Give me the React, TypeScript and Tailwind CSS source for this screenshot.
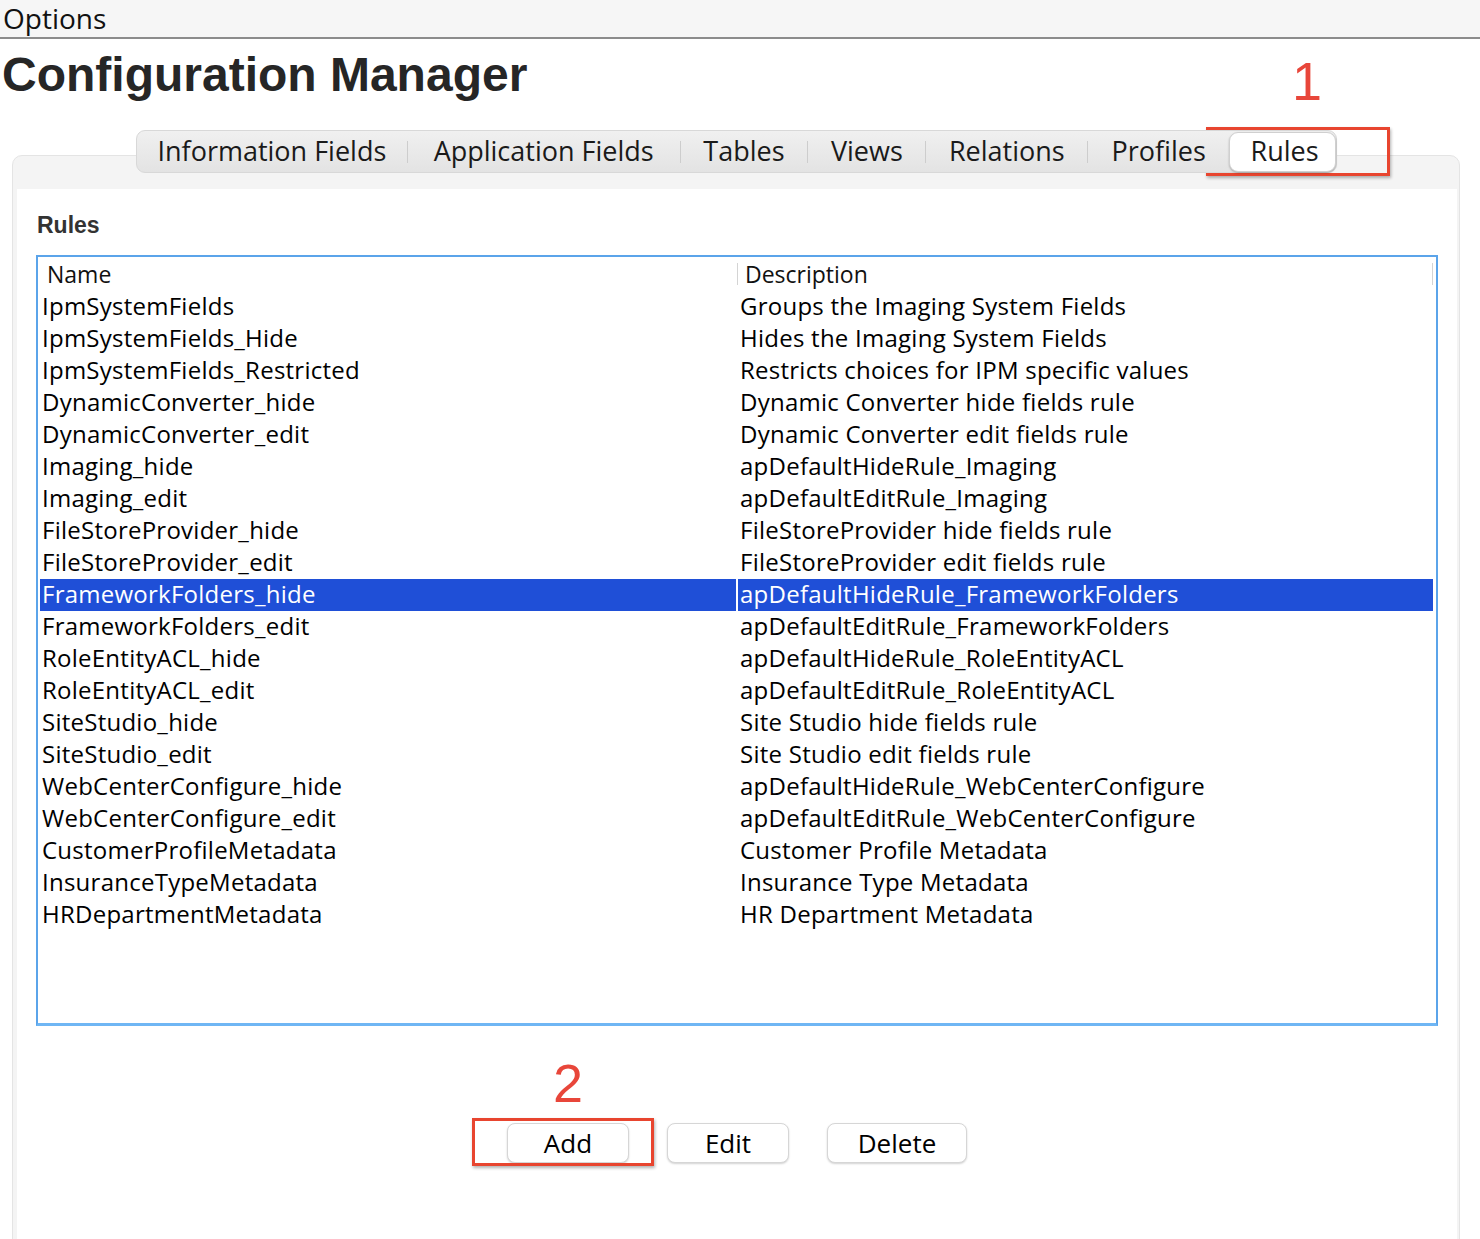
import React from 'react';

const rows: [string, string][] = [
  ['IpmSystemFields', 'Groups the Imaging System Fields'],
  ['IpmSystemFields_Hide', 'Hides the Imaging System Fields'],
  ['IpmSystemFields_Restricted', 'Restricts choices for IPM specific values'],
  ['DynamicConverter_hide', 'Dynamic Converter hide fields rule'],
  ['DynamicConverter_edit', 'Dynamic Converter edit fields rule'],
  ['Imaging_hide', 'apDefaultHideRule_Imaging'],
  ['Imaging_edit', 'apDefaultEditRule_Imaging'],
  ['FileStoreProvider_hide', 'FileStoreProvider hide fields rule'],
  ['FileStoreProvider_edit', 'FileStoreProvider edit fields rule'],
  ['FrameworkFolders_hide', 'apDefaultHideRule_FrameworkFolders'],
  ['FrameworkFolders_edit', 'apDefaultEditRule_FrameworkFolders'],
  ['RoleEntityACL_hide', 'apDefaultHideRule_RoleEntityACL'],
  ['RoleEntityACL_edit', 'apDefaultEditRule_RoleEntityACL'],
  ['SiteStudio_hide', 'Site Studio hide fields rule'],
  ['SiteStudio_edit', 'Site Studio edit fields rule'],
  ['WebCenterConfigure_hide', 'apDefaultHideRule_WebCenterConfigure'],
  ['WebCenterConfigure_edit', 'apDefaultEditRule_WebCenterConfigure'],
  ['CustomerProfileMetadata', 'Customer Profile Metadata'],
  ['InsuranceTypeMetadata', 'Insurance Type Metadata'],
  ['HRDepartmentMetadata', 'HR Department Metadata'],
];

const selected = 'FrameworkFolders_hide';

function TabSep() {
  return <div className="w-px h-[22px] bg-[#cdcdcd]" />;
}

export default function App() {
  return (
    <div className="relative w-[1480px] h-[1239px] overflow-hidden bg-white text-black font-['Open_Sans',sans-serif]">
      {/* menu strip */}
      <div className="h-[39px] bg-[#f6f6f6] border-b-2 border-[#8c8c8c] pl-[3px] text-[28px] leading-[36px] text-[#111]">
        Options
      </div>

      <h1 className="mt-[12px] pl-[2px] h-[48px] text-[48px] leading-[48px] font-bold text-[#262626] font-['Liberation_Sans',Arial,sans-serif]">
        Configuration Manager
      </h1>

      {/* segmented tabs */}
      <div className="relative z-10 mt-[31px] ml-[136px] w-[1201px] h-[43px] flex items-center rounded-[9px] border border-[#d8d8d8] bg-gradient-to-b from-[#f0f0f0] to-[#e3e3e3] text-[27px] text-[#1a1a1a]">
        <div className="w-[270px] text-center">Information Fields</div>
        <TabSep />
        <div className="w-[272px] text-center">Application Fields</div>
        <TabSep />
        <div className="w-[127px] text-center">Tables</div>
        <TabSep />
        <div className="w-[117px] text-center">Views</div>
        <TabSep />
        <div className="w-[161px] text-center">Relations</div>
        <TabSep />
        <div className="w-[141px] text-center">Profiles</div>
        <div className="w-[107px] h-[40px] flex items-center justify-center pl-[4px] rounded-[9px] bg-white border border-[#d0d0d0] shadow-[0_1px_2px_rgba(0,0,0,0.25)]">
          Rules
        </div>
      </div>

      {/* tab pane */}
      <div className="-mt-[18px] ml-[12px] w-[1448px] rounded-t-[10px] border border-[#e4e4e4] bg-[#f4f4f4] pt-[33px] pl-[4px] pr-[2px]">
        <div className="bg-white h-[1060px] flex flex-col">
          <div className="mt-[22px] ml-[20px] h-[28px] text-[23px] leading-[28px] font-bold text-[#333] font-['Liberation_Sans',Arial,sans-serif]">
            Rules
          </div>

          <div className="mt-[16px] ml-[19px] w-[1402px] h-[771px] border-2 border-[#5ba4ea] border-b-[3px] border-b-[#6fb6f4] pl-[2px] pr-[3px]">
            <div className="h-[34px] flex items-center text-[23px] leading-[30px] text-[#111]">
              <div className="w-[697px] pl-[7px]">Name</div>
              <div className="w-px h-[22px] bg-[#d4d4d4]" />
              <div className="w-[694px] pl-[7px]">Description</div>
              <div className="w-px h-[22px] bg-[#d4d4d4]" />
            </div>
            {rows.map(([name, desc]) => {
              const sel = name === selected;
              const cell = sel ? 'bg-[#1f4fd7] text-white' : '';
              return (
                <div key={name} className="h-[32px] flex gap-[2px] text-[24px] leading-[30px] tracking-[0.25px]">
                  <div className={`w-[696px] pl-[2px] whitespace-nowrap ${cell}`}>{name}</div>
                  <div className={`w-[695px] pl-[2px] whitespace-nowrap ${cell}`}>{desc}</div>
                </div>
              );
            })}
          </div>

          <div className="mt-[97px] flex justify-center gap-[38px] text-[26px]">
            <button className="w-[122px] h-[40px] pb-[3px] rounded-[8px] bg-white border border-[#d6d6d6] shadow-[0_1px_2px_rgba(0,0,0,0.18)]">
              Add
            </button>
            <button className="w-[122px] h-[40px] pb-[3px] rounded-[8px] bg-white border border-[#d6d6d6] shadow-[0_1px_2px_rgba(0,0,0,0.18)]">
              Edit
            </button>
            <button className="w-[140px] h-[40px] pb-[3px] rounded-[8px] bg-white border border-[#d6d6d6] shadow-[0_1px_2px_rgba(0,0,0,0.18)]">
              Delete
            </button>
          </div>
        </div>
      </div>

      {/* red call-outs */}
      <div className="absolute left-[1292px] top-[54px] text-[54px] leading-[54px] text-[#e8463a] font-['Liberation_Sans',Arial,sans-serif]">
        1
      </div>
      <div className="absolute left-[1206px] top-[127px] w-[184px] h-[49px] border-[3px] border-[#e8452f] shadow-[1px_2px_3px_rgba(0,0,0,0.3)]" />
      <div className="absolute left-[553px] top-[1056px] text-[54px] leading-[54px] text-[#e8463a] font-['Liberation_Sans',Arial,sans-serif]">
        2
      </div>
      <div className="absolute left-[472px] top-[1118px] w-[182px] h-[48px] border-[3px] border-[#e8452f] shadow-[1px_2px_3px_rgba(0,0,0,0.3)]" />
    </div>
  );
}
